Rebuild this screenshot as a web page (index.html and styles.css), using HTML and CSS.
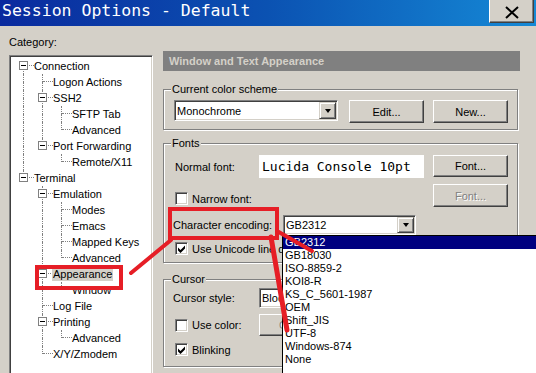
FILE: index.html
```html
<!DOCTYPE html>
<html lang="en">
<head>
    <meta charset="UTF-8">
    <title>Session Options - Default</title>
    <link rel="stylesheet" href="styles.css">
</head>
<body>

    <div class="titlebar">
        <span class="title">Session Options - Default</span>
        <div class="close">
            <svg width="14" height="13" viewBox="0 0 14 13"><path d="M1 1 L13 12 M13 1 L1 12" stroke="#000" stroke-width="2"/></svg>
        </div>
    </div>

    <div class="main">
        <div class="side">
            <div class="caption">Category:</div>
            <div class="tree" id="tree"></div>
        </div>

        <div class="panel">
            <div class="header">Window and Text Appearance</div>

            <div class="group scheme">
                <span class="legend">Current color scheme</span>
                <div class="line">
                    <div class="combo scheme-combo">
                        <span class="combo-text">Monochrome</span>
                        <span class="drop"><i class="arrow"></i></span>
                    </div>
                    <button class="btn edit">Edit...</button>
                    <button class="btn new">New...</button>
                </div>
            </div>

            <div class="group fonts">
                <span class="legend">Fonts</span>
                <div class="line r1">
                    <span class="lbl-normal">Normal font:</span>
                    <span class="preview">Lucida Console 10pt</span>
                    <button class="btn push">Font...</button>
                </div>
                <div class="line r2">
                    <label class="check"><span class="cb"></span>Narrow font:</label>
                    <button class="btn push off">Font...</button>
                </div>
                <div class="line r3">
                    <span class="lbl-enc">Character encoding:</span>
                    <div class="combo enc">
                        <span class="combo-text">GB2312</span>
                        <span class="drop"><i class="arrow"></i></span>
                        <div class="list">
                            <div class="on">GB2312</div>
                            <div>GB18030</div>
                            <div>ISO-8859-2</div>
                            <div>KOI8-R</div>
                            <div>KS_C_5601-1987</div>
                            <div>OEM</div>
                            <div>Shift_JIS</div>
                            <div>UTF-8</div>
                            <div>Windows-874</div>
                            <div>None</div>
                        </div>
                    </div>
                </div>
                <div class="line r4">
                    <label class="check"><span class="cb checked"></span>Use Unicode line drawing code points</label>
                </div>
            </div>

            <div class="group cursor">
                <span class="legend">Cursor</span>
                <div class="line c1">
                    <span class="lbl-style">Cursor style:</span>
                    <div class="combo style-combo">
                        <span class="combo-text">Block</span>
                        <span class="drop"><i class="arrow"></i></span>
                    </div>
                </div>
                <div class="line c2">
                    <label class="check wide"><span class="cb"></span>Use color:</label>
                    <button class="btn off">Color...</button>
                </div>
                <div class="line c3">
                    <label class="check"><span class="cb checked"></span>Blinking</label>
                </div>
            </div>
        </div>
    </div>

    <!-- red annotations drawn over the dialog -->
    <svg class="marks" width="536" height="373" viewBox="0 0 536 373">
        <g fill="none" stroke="#e61e26" stroke-width="4">
            <rect x="170" y="209" width="107" height="29"/>
            <rect x="37" y="267" width="84" height="21"/>
            <path d="M131 273 L171 240" stroke-linecap="round"/>
            <path d="M277 231 L312 251" stroke-linecap="round"/>
            <path d="M271 237 L287 330" stroke-width="5" stroke-linecap="round"/>
        </g>
    </svg>

    <script>
    // tree rows: label, connector per indent column, selected
    const items = [
        ['Connection', 'b'],
        ['Logon Actions', '|T'],
        ['SSH2', '|B'],
        ['SFTP Tab', '||T'],
        ['Advanced', '||L'],
        ['Port Forwarding', '|E'],
        ['Remote/X11', '| L'],
        ['Terminal', 'E'],
        ['Emulation', ' B'],
        ['Modes', ' |T'],
        ['Emacs', ' |T'],
        ['Mapped Keys', ' |T'],
        ['Advanced', ' |L'],
        ['Appearance', ' B', true],
        ['Window', ' |L'],
        ['Log File', ' T'],
        ['Printing', ' B'],
        ['Advanced', ' |L'],
        ['X/Y/Zmodem', ' L']
    ];

    const kinds = {
        ' ': '',
        '|': 'up down',
        'T': 'up down east',
        'L': 'up east',
        'b': 'down east box',
        'B': 'up down east box',
        'E': 'up east box'
    };

    const tree = document.getElementById('tree');
    items.forEach(([label, cols, selected]) => {
        const row = document.createElement('div');
        row.className = 'row';
        let html = '';
        for (const c of cols) {
            const cls = kinds[c];
            html += `<span class="cell ${cls}"><i></i><i></i><i></i><i></i>${cls.includes('box') ? '<b class="plus"></b>' : ''}</span>`;
        }
        html += `<span class="label${selected ? ' selected' : ''}">${label}</span>`;
        row.innerHTML = html;
        tree.appendChild(row);
    });

    // check marks
    document.querySelectorAll('.cb.checked').forEach(cb => {
        cb.innerHTML = '<svg width="7" height="8" viewBox="0 0 7 8"><polygon points="0,2.5 2.5,5 7,0.5 7,3.5 2.5,8 0,5.5" fill="#000"/></svg>';
    });
    </script>

</body>
</html>
```
FILE: styles.css
```css
* {
    box-sizing: border-box;
}

body {
    margin: 0;
    width: 536px;
    height: 373px;
    overflow: hidden;
    position: relative;
    background: #d4d0c8;
    font-family: "Liberation Sans", Arial, sans-serif;
    font-size: 11px;
    color: #000;
}

/* title bar */
.titlebar {
    height: 26px;
    display: flex;
    justify-content: space-between;
    align-items: flex-start;
    background: linear-gradient(to right, #0a2a9e 0%, #0b52b2 50%, #1589d6 100%);
}

.title {
    color: #fff;
    font-family: "DejaVu Sans Mono", monospace;
    font-size: 16.5px;
    line-height: 22px;
    padding-left: 2px;
    white-space: pre;
}

.close {
    width: 45px;
    height: 25px;
    margin: -2px 2px 0 0;
    padding-top: 4px;
    background: #d4d0c8;
    border: 1px solid;
    border-color: #fff #404040 #404040 #fff;
    box-shadow: inset -1px -1px #808080;
    display: flex;
    align-items: center;
    justify-content: center;
}

.main {
    display: flex;
    padding: 9px 0 0 9px;
}

/* category tree */
.side {
    width: 144px;
    flex: none;
}

.caption {
    line-height: 14px;
}

.tree {
    margin-top: 6px;
    height: 330px;
    background: #fff;
    border: 1px solid;
    border-color: #808080 #fff #fff #808080;
    box-shadow: inset 1px 1px #404040, inset -1px -1px #d4d0c8;
    padding: 2px 0 0 5px;
}

.row {
    display: flex;
    align-items: center;
    height: 16px;
    white-space: nowrap;
}

.cell {
    display: grid;
    grid-template-columns: 9px 10px;
    grid-template-rows: 8px 8px;
    width: 19px;
    height: 16px;
    flex: none;
}

.cell i {
    display: block;
}

.cell i:nth-child(1) { grid-area: 1 / 1; }
.cell i:nth-child(2) { grid-area: 1 / 2; }
.cell i:nth-child(3) { grid-area: 2 / 1; }
.cell i:nth-child(4) { grid-area: 2 / 2; }

.cell.up i:nth-child(1) {
    border-right: 1px dotted #808080;
}

.cell.down i:nth-child(3) {
    border-right: 1px dotted #808080;
}

.cell.east i:nth-child(2) {
    border-bottom: 1px dotted #808080;
}

.plus {
    grid-area: 1 / 1 / 3 / 3;
    width: 9px;
    height: 9px;
    margin: 3px 0 0 4px;
    background: #fff;
    border: 1px solid #808080;
    display: flex;
    align-items: center;
    justify-content: center;
}

.plus::before {
    content: "";
    width: 5px;
    height: 1px;
    background: #000;
}

.label {
    margin-left: -1px;
    padding: 0 1px;
    line-height: 14px;
}

.label.selected {
    background: #d4d0c8;
}

/* right panel */
.panel {
    width: 357px;
    margin-left: 10px;
    padding-top: 16px;
    flex: none;
}

.header {
    height: 20px;
    line-height: 20px;
    background: #808080;
    color: #d4d0c8;
    font-weight: bold;
    padding-left: 6px;
}

.group {
    width: 355px;
    border: 1px solid #808080;
    box-shadow: 1px 1px 0 #fff, inset 1px 1px 0 #fff;
    display: flex;
    flex-direction: column;
    padding: 0 9px 0 11px;
}

.legend {
    align-self: flex-start;
    margin: -8px 0 0 -4px;
    padding: 0 1px;
    line-height: 14px;
    background: #d4d0c8;
}

.line {
    display: flex;
    align-items: center;
}

.scheme {
    margin-top: 18px;
    padding-bottom: 6px;
}

.scheme .line {
    margin-top: 4px;
    align-items: flex-start;
}

.fonts {
    margin-top: 13px;
    padding-bottom: 7px;
}

.cursor {
    margin-top: 16px;
    padding-bottom: 10px;
}

/* combo boxes */
.combo {
    position: relative;
    display: flex;
    align-items: center;
    height: 21px;
    background: #fff;
    border: 1px solid;
    border-color: #808080 #fff #fff #808080;
    box-shadow: inset 1px 1px #404040, inset -1px -1px #d4d0c8;
    padding: 1px;
    flex: none;
}

.combo-text {
    flex: 1;
    padding-left: 1px;
    white-space: nowrap;
}

.drop {
    flex: none;
    align-self: stretch;
    width: 17px;
    background: #d4d0c8;
    border: 1px solid;
    border-color: #d4d0c8 #404040 #404040 #d4d0c8;
    box-shadow: inset 1px 1px #fff, inset -1px -1px #808080;
    display: flex;
    align-items: center;
    justify-content: center;
}

.arrow {
    width: 0;
    height: 0;
    border-top: 4px solid #000;
    border-left: 3.5px solid transparent;
    border-right: 3.5px solid transparent;
}

.scheme-combo {
    width: 164px;
    margin-left: -1px;
}

.enc {
    width: 133px;
    height: 20px;
}

.style-combo {
    width: 150px;
    height: 20px;
}

/* buttons */
.btn {
    width: 75px;
    height: 23px;
    padding: 0;
    font: inherit;
    color: #000;
    background: #d4d0c8;
    border: 1px solid;
    border-color: #fff #404040 #404040 #fff;
    box-shadow: inset -1px -1px #808080;
    flex: none;
}

.btn.off {
    color: #808080;
    text-shadow: 1px 1px 0 #fff;
}

.btn.push {
    margin-left: auto;
}

.edit {
    margin-left: 11px;
}

.new {
    margin-left: 9px;
}

/* fonts group */
.r1 {
    margin-top: 5px;
    height: 23px;
}

.r1 .btn {
    height: 22px;
    align-self: flex-start;
}

.lbl-normal {
    width: 84px;
}

.preview {
    width: 165px;
    height: 23px;
    background: #fff;
    font-family: "DejaVu Sans Mono", monospace;
    font-size: 13px;
    line-height: 23px;
    padding-left: 3px;
    white-space: pre;
}

.r2 {
    margin-top: 6px;
    height: 23px;
    align-items: flex-start;
}

.r2 .check {
    margin-top: 8px;
}

.r3 {
    margin-top: 8px;
    height: 20px;
}

.lbl-enc {
    width: 110px;
    margin-left: -2px;
}

.r4 {
    margin-top: 7px;
    height: 13px;
}

/* check boxes */
.check {
    display: flex;
    align-items: center;
    gap: 4px;
    white-space: nowrap;
}

.check.wide {
    width: 84px;
}

.cb {
    width: 13px;
    height: 13px;
    flex: none;
    background: #fff;
    border: 1px solid;
    border-color: #808080 #fff #fff #808080;
    box-shadow: inset 1px 1px #404040, inset -1px -1px #d4d0c8;
    display: flex;
    align-items: center;
    justify-content: center;
}

/* cursor group */
.c1 {
    margin-top: 2px;
    height: 20px;
}

.lbl-style {
    width: 86px;
    margin-left: -2px;
}

.c2 {
    margin-top: 6px;
    height: 22px;
}

.c2 .btn {
    height: 22px;
}

.c3 {
    margin-top: 7px;
    height: 13px;
}

/* open drop-down list */
.list {
    position: absolute;
    left: -2px;
    top: 19px;
    width: 260px;
    height: 150px;
    background: #fff;
    border: 1px solid #000;
    z-index: 5;
}

.list div {
    height: 13px;
    line-height: 13px;
    padding-left: 2px;
    white-space: nowrap;
}

.list .on {
    background: #000080;
    color: #fff;
}

.marks {
    position: absolute;
    left: 0;
    top: 0;
    pointer-events: none;
    z-index: 10;
}
```
